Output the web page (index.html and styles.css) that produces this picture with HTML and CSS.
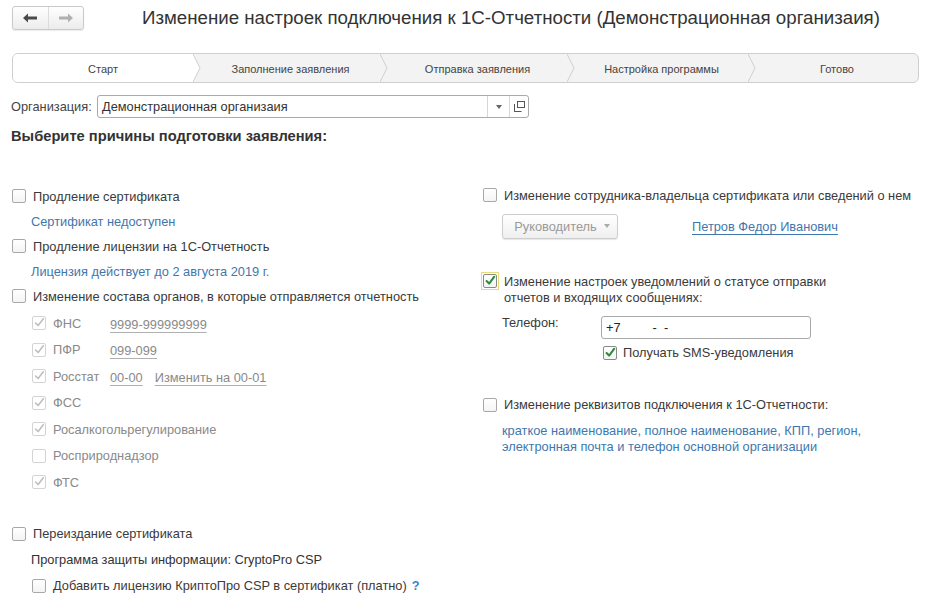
FILE: index.html
```html
<!DOCTYPE html>
<html lang="ru">
<head>
<meta charset="utf-8">
<title>Изменение настроек подключения</title>
<link rel="stylesheet" href="styles.css">
</head>
<body>
<div class="top">
  <div class="nav">
    <span class="nav-btn"><svg width="16" height="10" viewBox="0 0 16 10"><path d="M1 5 L6 0.5 L6 3.5 L15 3.5 L15 6.5 L6 6.5 L6 9.5 Z" fill="#4a4a4a"/></svg></span>
    <span class="nav-btn nav-btn--r"><svg width="16" height="10" viewBox="0 0 16 10"><path d="M15 5 L10 0.5 L10 3.5 L1 3.5 L1 6.5 L10 6.5 L10 9.5 Z" fill="#b0b0b0"/></svg></span>
  </div>
  <h1 class="title">Изменение настроек подключения к 1С-Отчетности (Демонстрационная организаия)</h1>
</div>

<div class="steps">
  <div class="step step--active s1">Старт</div>
  <svg class="chev chev--first" width="8" height="28" viewBox="0 0 8 28"><path d="M0 0 L7 14 L0 28 Z" fill="#fff"/><path d="M0 0 L7 14 L0 28" fill="none" stroke="#cfcfcf"/></svg>
  <div class="step s2">Заполнение заявления</div>
  <svg class="chev" width="8" height="28" viewBox="0 0 8 28"><path d="M0 0 L7 14 L0 28" fill="none" stroke="#cfcfcf"/></svg>
  <div class="step s3">Отправка заявления</div>
  <svg class="chev" width="8" height="28" viewBox="0 0 8 28"><path d="M0 0 L7 14 L0 28" fill="none" stroke="#cfcfcf"/></svg>
  <div class="step s4">Настройка программы</div>
  <svg class="chev" width="8" height="28" viewBox="0 0 8 28"><path d="M0 0 L7 14 L0 28" fill="none" stroke="#cfcfcf"/></svg>
  <div class="step s5">Готово</div>
</div>

<div class="org">
  <span class="org-label">Организация:</span>
  <div class="org-field">
    <span class="org-value">Демонстрационная организаия</span>
    <span class="org-btn"><svg width="6" height="4" viewBox="0 0 6 4"><path d="M0 0 L6 0 L3 4 Z" fill="#666"/></svg></span>
    <span class="org-btn"><svg width="11" height="11" viewBox="0 0 11 11"><rect x="3.5" y="0.5" width="7" height="6" fill="none" stroke="#555"/><path d="M0.5 3 L0.5 10.5 L7.5 10.5" fill="none" stroke="#555"/><path d="M0.5 6 L0.5 10.5 L5 10.5" fill="none" stroke="#555"/></svg></span>
  </div>
</div>

<h2 class="heading">Выберите причины подготовки заявления:</h2>

<div class="cols">
  <div class="col-left">
    <div class="row"><span class="cb"></span><span>Продление сертификата</span></div>
    <div class="row note">Сертификат недоступен</div>
    <div class="row"><span class="cb"></span><span>Продление лицензии на 1С-Отчетность</span></div>
    <div class="row note">Лицензия действует до 2 августа 2019 г.</div>
    <div class="row"><span class="cb"></span><span>Изменение состава органов, в которые отправляется отчетность</span></div>

    <div class="subs">
      <div class="sub"><span class="cb cb--dis cb--on"><svg viewBox="0 0 14 14"><path d="M3 7 L6 10 L12 2" /></svg></span><span class="sub-label">ФНС</span><span class="code">9999-999999999</span></div>
      <div class="sub"><span class="cb cb--dis cb--on"><svg viewBox="0 0 14 14"><path d="M3 7 L6 10 L12 2" /></svg></span><span class="sub-label">ПФР</span><span class="code">099-099</span></div>
      <div class="sub"><span class="cb cb--dis cb--on"><svg viewBox="0 0 14 14"><path d="M3 7 L6 10 L12 2" /></svg></span><span class="sub-label">Росстат</span><span class="code">00-00</span><span class="code code--gap">Изменить на 00-01</span></div>
      <div class="sub"><span class="cb cb--dis cb--on"><svg viewBox="0 0 14 14"><path d="M3 7 L6 10 L12 2" /></svg></span><span class="sub-label">ФСС</span></div>
      <div class="sub"><span class="cb cb--dis cb--on"><svg viewBox="0 0 14 14"><path d="M3 7 L6 10 L12 2" /></svg></span><span class="sub-label">Росалкогольрегулирование</span></div>
      <div class="sub"><span class="cb cb--dis"></span><span class="sub-label">Росприроднадзор</span></div>
      <div class="sub"><span class="cb cb--dis cb--on"><svg viewBox="0 0 14 14"><path d="M3 7 L6 10 L12 2" /></svg></span><span class="sub-label">ФТС</span></div>
    </div>

    <div class="bottom">
      <div class="row row26"><span class="cb"></span><span>Переиздание сертификата</span></div>
      <div class="row row26 plain">Программа защиты информации: CryptoPro CSP</div>
      <div class="row row26 indent"><span class="cb"></span><span>Добавить лицензию КриптоПро CSP в сертификат (платно)</span><span class="help">?</span></div>
    </div>
  </div>

  <div class="col-right">
    <div class="row"><span class="cb"></span><span>Изменение сотрудника-владельца сертификата или сведений о нем</span></div>
    <div class="owner">
      <span class="btn">Руководитель<svg width="6" height="4" viewBox="0 0 6 4"><path d="M0 0 L6 0 L3 4 Z" fill="#aaa"/></svg></span>
      <span class="link">Петров Федор Иванович</span>
    </div>
    <div class="notify">
      <span class="cb-frame"><span class="cb cb--green"><svg viewBox="0 0 14 14"><path d="M3 7 L6 10 L12 2" /></svg></span></span>
      <span class="notify-text">Изменение настроек уведомлений о статусе отправки<br>отчетов и входящих сообщениях:</span>
    </div>
    <div class="phone">
      <span class="phone-label">Телефон:</span>
      <span class="phone-input">+7&nbsp;&nbsp;&nbsp;&nbsp;&nbsp;&nbsp;&nbsp;&nbsp;&nbsp;-&nbsp;&nbsp;-</span>
    </div>
    <div class="sms"><span class="cb cb--green"><svg viewBox="0 0 14 14"><path d="M3 7 L6 10 L12 2" /></svg></span><span>Получать SMS-уведомления</span></div>
    <div class="row req"><span class="cb"></span><span>Изменение реквизитов подключения к 1С-Отчетности:</span></div>
    <div class="req-note">краткое наименование, полное наименование, КПП, регион,<br>электронная почта и телефон основной организации</div>
  </div>
</div>
</body>
</html>
```

FILE: styles.css
```css
* { box-sizing: border-box; }
html, body { margin: 0; padding: 0; background: #fff; }
body {
  font-family: "Liberation Sans", Arial, sans-serif;
  font-size: 12.8px;
  color: #3a3a3a;
  width: 931px;
  height: 606px;
  overflow: hidden;
}

.top {
  display: flex;
  align-items: center;
  padding: 6px 12px 0;
}
.nav {
  display: flex;
  width: 72px;
  height: 24px;
  border: 1px solid #c9c9c9;
  border-radius: 3px;
  background: linear-gradient(#ffffff, #ececec);
  box-shadow: 0 1px 1px rgba(0,0,0,0.08);
}
.nav-btn {
  flex: 1;
  display: flex;
  align-items: center;
  justify-content: center;
}
.nav-btn--r { border-left: 1px solid #dcdcdc; }
.title {
  margin: 0 0 0 58px;
  font-size: 18.7px;
  font-weight: normal;
  color: #333;
  white-space: nowrap;
}

.steps {
  display: flex;
  margin: 23px 12px 0;
  height: 30px;
  border: 1px solid #cfcfcf;
  border-radius: 6px;
  background: #f3f3f3;
  overflow: hidden;
  font-size: 11px;
  color: #444;
}
.step {
  display: flex;
  align-items: center;
  justify-content: center;
  padding-top: 1px;
}
.step--active { background: #fff; }
.s1 { width: 180px; }
.s2 { width: 179px; }
.s3 { width: 179px; }
.s4 { width: 173px; }
.s5 { flex: 1; }
.chev { flex: none; display: block; }

.org {
  display: flex;
  align-items: center;
  margin: 12px 0 0 11px;
  height: 23px;
}
.org-label { width: 86px; color: #444; }
.org-field {
  display: flex;
  width: 432px;
  height: 23px;
  border: 1px solid #a9a9a9;
  border-radius: 3px;
}
.org-value {
  flex: 1;
  padding-left: 4px;
  line-height: 21px;
  color: #333;
}
.org-btn {
  width: 22px;
  display: flex;
  align-items: center;
  justify-content: center;
  border-left: 1px solid #d6d6d6;
}
.org-btn + .org-btn { width: 19px; }

.heading {
  margin: 10px 0 0 11px;
  font-size: 14.7px;
  line-height: 16px;
  font-weight: bold;
  color: #333;
}

.cols {
  display: grid;
  grid-template-columns: 471px 1fr;
  margin-top: 39.5px;
  padding-left: 12px;
}

.row {
  display: flex;
  align-items: center;
  height: 25px;
  white-space: nowrap;
}
.row26 { height: 26px; }
.row .cb { margin-right: 7px; }
.note { padding-left: 19px; color: #3f77ad; }
.plain { padding-left: 19px; color: #333; }
.indent { padding-left: 20px; }

.cb {
  flex: none;
  position: relative;
  display: inline-block;
  width: 14px;
  height: 14px;
  border: 1px solid #a8a8a8;
  border-radius: 2px;
  background: linear-gradient(#fff, #f4f4f4);
}
.cb svg {
  position: absolute;
  left: 0;
  top: 0;
  width: 12px;
  height: 12px;
  fill: none;
  stroke-width: 2;
  stroke-linecap: round;
  stroke-linejoin: round;
}
.cb--dis { border-color: #d4d4d4; background: #fff; }
.cb--dis svg { stroke: #bdbdbd; stroke-width: 1.8; }
.cb--green { border-color: #8a8a8a; }
.cb--green svg { stroke: #2e8b3c; stroke-width: 2.4; }

.subs {
  margin-top: 1.5px;
  padding-left: 20px;
  color: #8a8a8a;
}
.sub {
  display: flex;
  align-items: center;
  height: 26.5px;
  white-space: nowrap;
}
.sub .cb { margin-right: 7px; }
.sub-label { width: 57px; }
.code {
  color: #8a8a8a;
  text-decoration: underline;
  text-decoration-color: #b0b0b0;
  text-underline-offset: 3px;
  padding-top: 2px;
}
.code--gap { margin-left: 12px; }

.bottom { margin-top: 25px; }
.help {
  margin-left: 5px;
  color: #3c84c6;
  font-weight: bold;
}

.col-right { margin-top: -1px; }
.owner {
  display: flex;
  align-items: center;
  margin-top: 6px;
  padding-left: 19px;
  height: 25px;
}
.btn {
  display: flex;
  align-items: center;
  justify-content: center;
  gap: 7px;
  width: 116px;
  height: 25px;
  padding-left: 4px;
  border: 1px solid #cdcdcd;
  border-radius: 3px;
  background: linear-gradient(#ffffff, #efefef);
  box-shadow: 0 1px 1px rgba(0,0,0,0.1);
  color: #9a9a9a;
}
.link {
  margin-left: 74px;
  color: #3f77ad;
  text-decoration: underline;
  text-underline-offset: 3px;
}

.notify {
  display: flex;
  align-items: flex-start;
  margin-top: 35px;
  margin-left: -2px;
}
.cb-frame {
  flex: none;
  display: flex;
  align-items: center;
  justify-content: center;
  width: 18px;
  height: 18px;
  margin-top: -2px;
  margin-right: 5px;
  border: 1px solid #e6dc78;
}
.notify-text { line-height: 16px; color: #3a3a3a; }

.phone {
  display: flex;
  align-items: flex-start;
  margin-top: 10px;
  padding-left: 19px;
  height: 23px;
}
.phone-label { width: 99px; line-height: 14px; }
.phone-input {
  width: 210px;
  height: 23px;
  border: 1px solid #a9a9a9;
  border-radius: 3px;
  padding-left: 4px;
  line-height: 21px;
  color: #222;
}
.sms {
  display: flex;
  align-items: center;
  margin-top: 7px;
  padding-left: 120px;
  height: 14px;
  white-space: nowrap;
}
.sms .cb { margin-right: 6px; }

.req { margin-top: 32.5px; }
.req-note {
  margin-top: 5.5px;
  padding-left: 19px;
  line-height: 16px;
  color: #3f77ad;
}
```
